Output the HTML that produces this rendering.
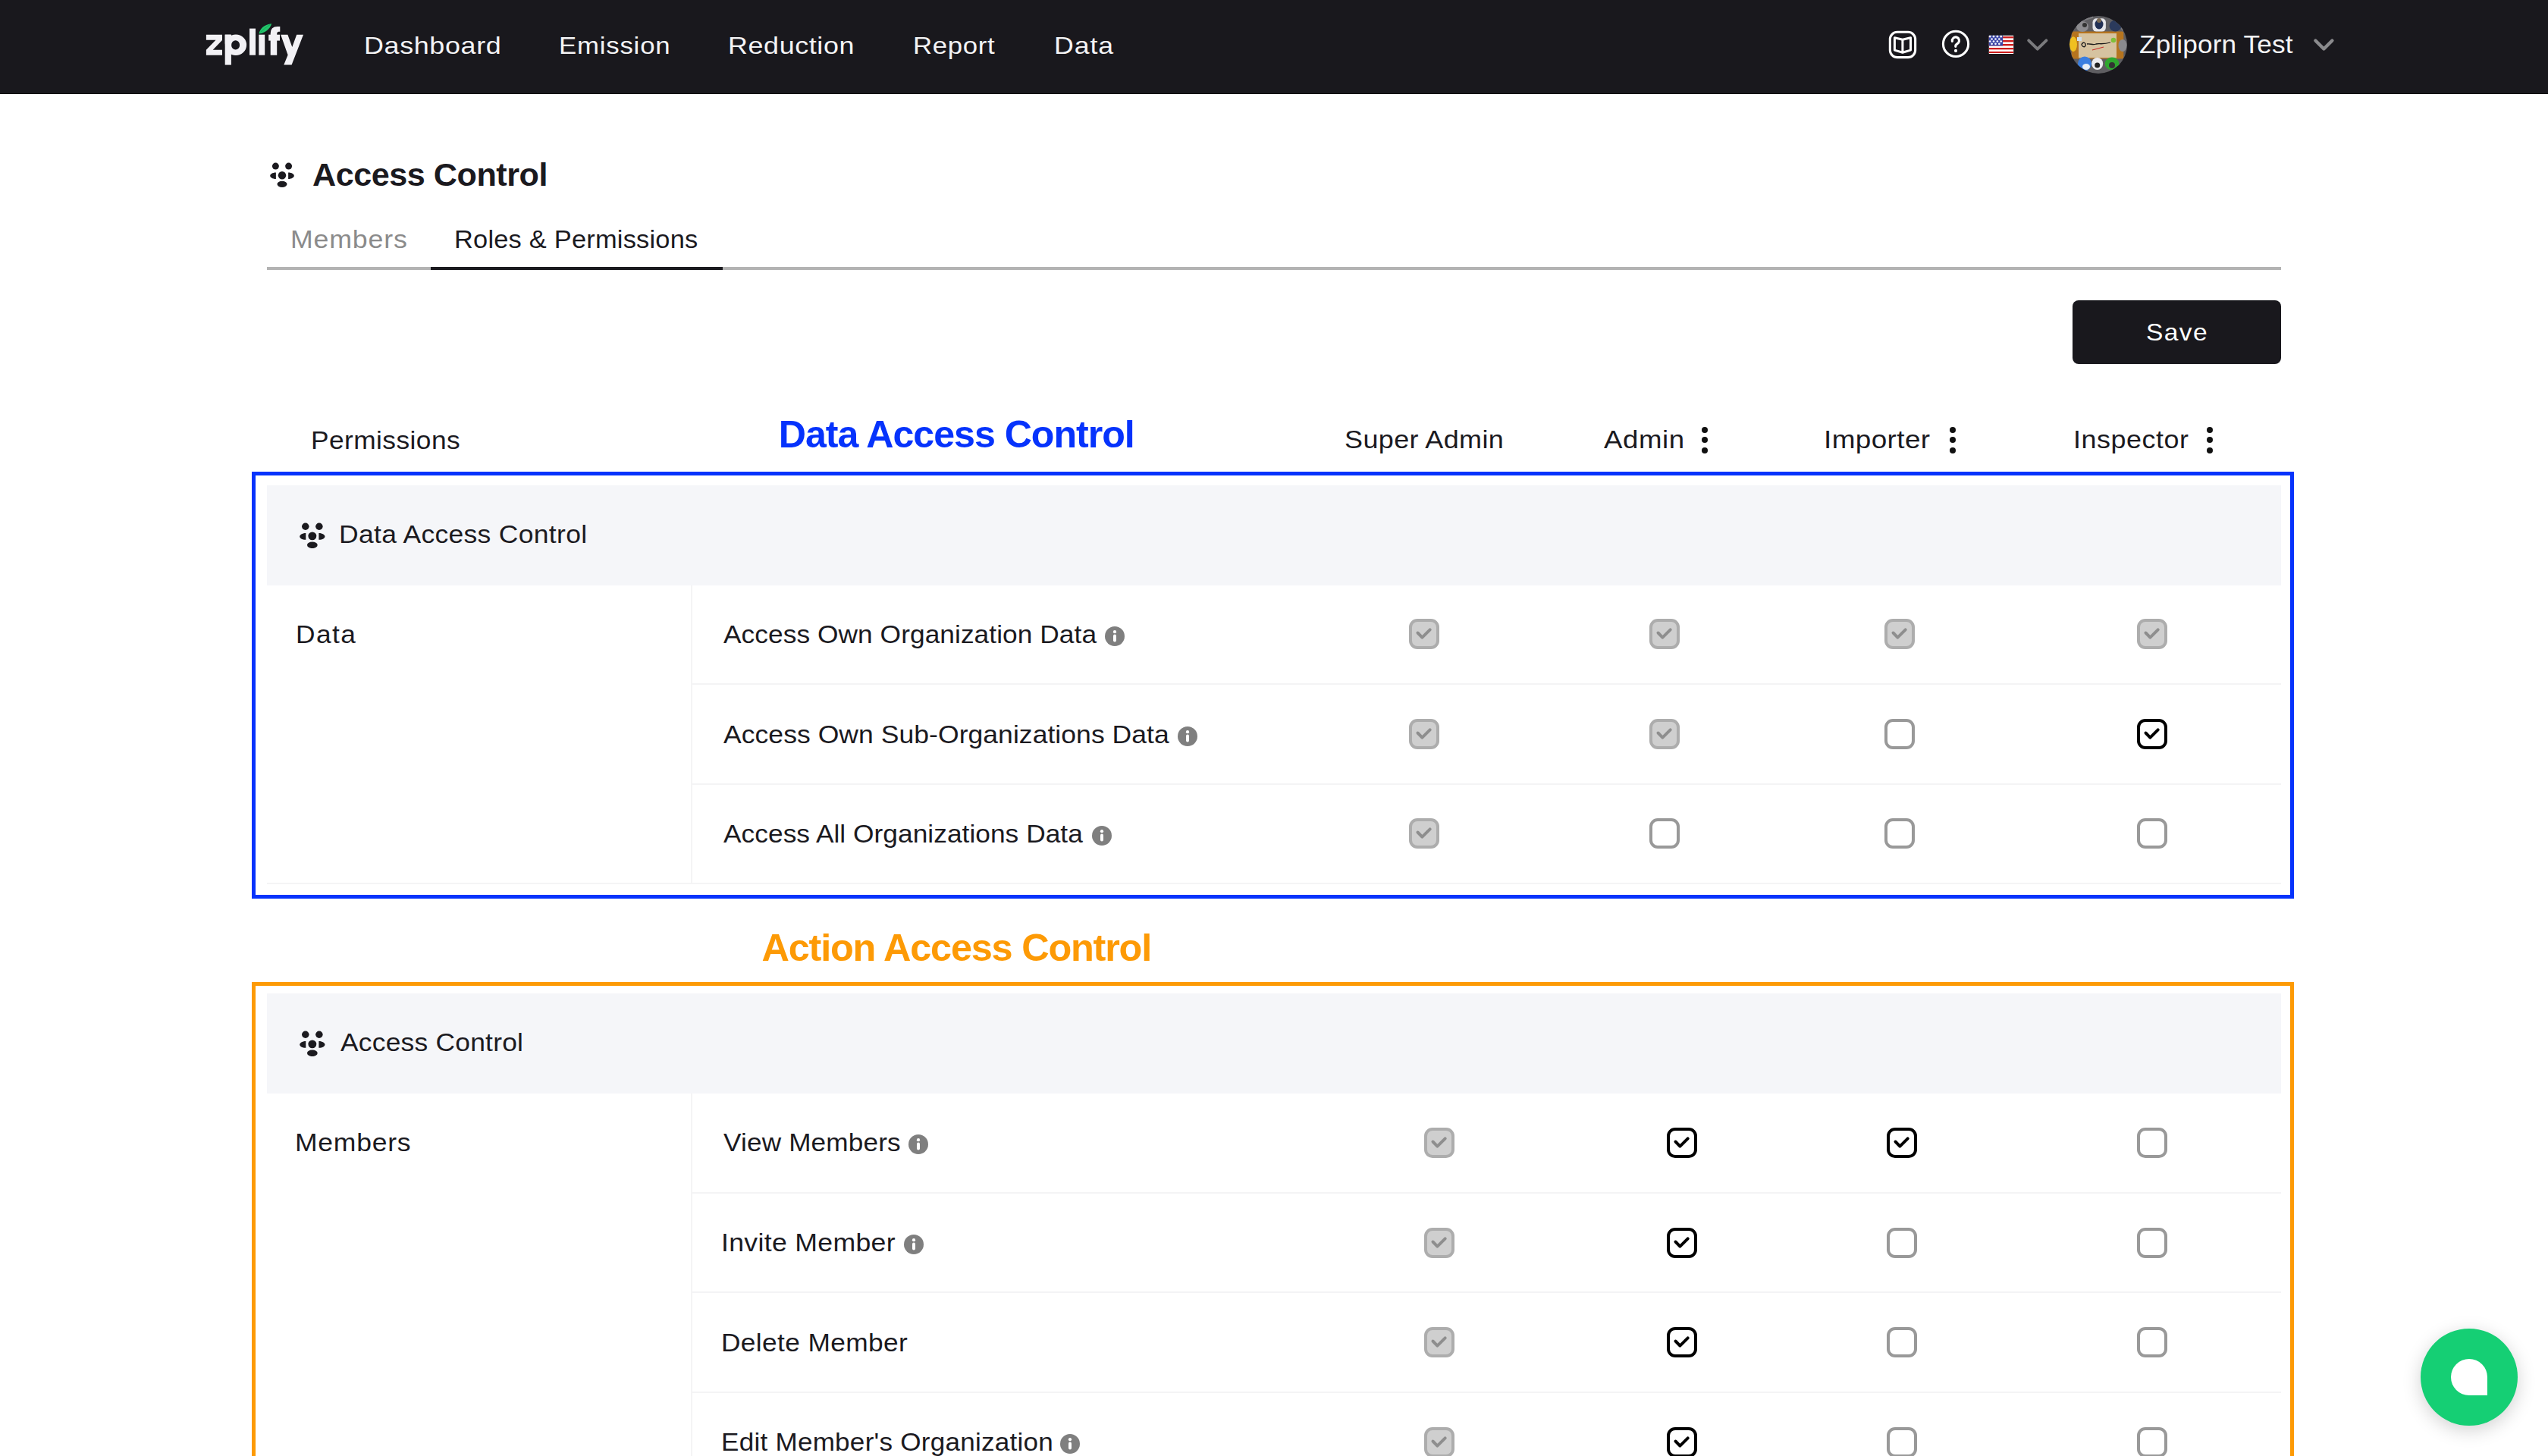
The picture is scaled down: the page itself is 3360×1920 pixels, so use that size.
<!DOCTYPE html>
<html><head><meta charset="utf-8"><title>Access Control - Roles &amp; Permissions</title>
<style>
html,body{margin:0;padding:0;background:#fff;width:3360px;height:1920px;overflow:hidden;position:relative;font-family:"Liberation Sans",sans-serif}
.t{position:absolute;line-height:1;white-space:nowrap;transform-origin:0 0}
.r{position:absolute;display:block}
</style></head><body>
<header>
<div class="r" style="left:0px;top:0px;width:3360px;height:123px;background:#19181d"></div>
<div class="r" style="left:0px;top:123px;width:3360px;height:1px;background:#0c0c0d"></div>
<svg class="r" style="left:0;top:0" width="420" height="123" viewBox="0 0 420 123">
<g fill="#f2f1f5">
<polygon points="271.9,45.7 293,45.7 293,53 280.7,65.8 293,65.8 293,72.7 271.9,72.7 271.9,65.8 284.5,52.7 271.9,52.7"/>
<rect x="296.7" y="45.7" width="8.2" height="39.9"/>
<path fill-rule="evenodd" d="M311,45.5 A14.1,13.8 0 1 1 311,73.1 A14.1,13.8 0 1 1 311,45.5 Z M310.6,53.3 A5.5,6.1 0 1 0 310.6,65.5 A5.5,6.1 0 1 0 310.6,53.3 Z"/>
<rect x="296.7" y="45.7" width="8" height="12"/>
<rect x="329" y="37.6" width="8" height="35.1"/>
<rect x="341.3" y="45.7" width="7.9" height="27"/>
<path d="M356.7,72.7 L356.7,44 Q356.7,35 366,35 L369.3,35 L369.3,41.7 L367.5,41.7 Q365.2,41.7 365.2,44.2 L365.2,72.7 Z"/>
<rect x="354.2" y="45.7" width="14.8" height="7.9"/>
<polygon points="370.2,45.7 379.4,45.7 385.3,62 391.2,45.7 400,45.7 384.6,85.6 374.3,85.6 379.6,72.6"/>
</g>
<path fill="#22c56b" d="M341.5,44.6 C342.5,37.5 349,32 358.2,31.2 C356,38.5 349.5,43.2 341.5,44.6 Z"/>
<path stroke="#159a50" stroke-width="0.7" fill="none" d="M343.5,42.5 C347,39 351,36 356,32.5"/>
</svg>
<nav>
<div class="t" style="left:479.60px;top:43.68px;font-size:32.27px;letter-spacing:0.575px;color:#f4f4f6;transform:scaleX(1.1127);">Dashboard</div>
<div class="t" style="left:737.20px;top:43.68px;font-size:32.27px;letter-spacing:0.743px;color:#f4f4f6;transform:scaleX(1.0771);">Emission</div>
<div class="t" style="left:960.00px;top:43.68px;font-size:32.27px;letter-spacing:0.550px;color:#f4f4f6;transform:scaleX(1.1117);">Reduction</div>
<div class="t" style="left:1203.50px;top:43.68px;font-size:32.27px;letter-spacing:0.600px;color:#f4f4f6;transform:scaleX(1.0773);">Report</div>
<div class="t" style="left:1390.00px;top:43.68px;font-size:32.27px;letter-spacing:0.800px;color:#f4f4f6;transform:scaleX(1.1059);">Data</div>
</nav>
<svg class="r" style="left:2480px;top:0" width="620" height="123" viewBox="2480 0 620 123">
<rect x="2492.35" y="42.25" width="33.3" height="33.4" rx="9.5" ry="9.5" fill="none" stroke="#fff" stroke-width="3.1"/>
<path d="M2498.4,49.7 L2508.9,52.3 L2519.5,49.7 L2519.5,66.1 L2508.9,69.3 L2498.4,66.1 Z M2508.9,52.3 L2508.9,69.3" fill="none" stroke="#fff" stroke-width="3" stroke-linejoin="round"/>
<circle cx="2579.04" cy="57.9" r="16.6" fill="none" stroke="#fff" stroke-width="3.1"/>
<path d="M2574.4,54.4 A4.6,4.6 0 1 1 2582.3,56.7 C2581,58 2578.8,58.6 2578.8,60.3 L2578.8,61.3" fill="none" stroke="#fff" stroke-width="3.2" stroke-linecap="round" stroke-linejoin="round"/>
<circle cx="2579" cy="66.9" r="2.1" fill="#fff"/>
<g>
<rect x="2622.8" y="46.8" width="32.4" height="24.2" fill="#fff"/>
<rect x="2622.8" y="48.1" width="32.4" height="2.3" fill="#cc1d1d"/>
<rect x="2622.8" y="53.0" width="32.4" height="2.4" fill="#cc1d1d"/>
<rect x="2622.8" y="58.0" width="32.4" height="2.4" fill="#cc1d1d"/>
<rect x="2622.8" y="63.0" width="32.4" height="2.3" fill="#cc1d1d"/>
<rect x="2622.8" y="67.9" width="32.4" height="2.1" fill="#cc1d1d"/>
<rect x="2622.8" y="46.8" width="18.3" height="13.6" fill="#3a45a6"/>
<g fill="#f4f6ff"><circle cx="2624.2" cy="48.2" r="1.35"/><circle cx="2629" cy="48.2" r="1.35"/><circle cx="2633.9" cy="48.2" r="1.35"/><circle cx="2638.7" cy="48.2" r="1.35"/><circle cx="2626.6" cy="51.5" r="1.35"/><circle cx="2631.5" cy="51.5" r="1.35"/><circle cx="2636.3" cy="51.5" r="1.35"/><circle cx="2624.2" cy="54.6" r="1.35"/><circle cx="2629" cy="54.6" r="1.35"/><circle cx="2633.9" cy="54.6" r="1.35"/><circle cx="2638.7" cy="54.6" r="1.35"/><circle cx="2626.6" cy="57.8" r="1.35"/><circle cx="2631.5" cy="57.8" r="1.35"/><circle cx="2636.3" cy="57.8" r="1.35"/></g>
</g>
<polyline points="2675.2,53.3 2686.8,64.6 2698.4,53.3" fill="none" stroke="#7b7b7e" stroke-width="3.9" stroke-linecap="round" stroke-linejoin="round"/>
<defs><clipPath id="av"><circle cx="2767" cy="59" r="38"/></clipPath></defs>
<g clip-path="url(#av)">
<rect x="2729" y="21" width="76" height="76" fill="#5f5e62"/>
<path d="M2735,30 L2760,22 M2790,26 L2800,40 M2733,80 L2745,95 M2790,92 L2803,78" stroke="#7d7c80" stroke-width="3"/>
<rect x="2731.7" y="41.6" width="68.6" height="35.8" rx="2" fill="#b5741f"/>
<rect x="2741" y="44" width="50" height="32.2" fill="#d6c3a0"/>
<rect x="2739" y="49" width="6" height="5" fill="#cfe0f0"/>
<ellipse cx="2746" cy="35" rx="8" ry="7" fill="#8d8c90"/>
<ellipse cx="2749" cy="33" rx="3" ry="3" fill="#333"/>
<rect x="2759.5" y="24.3" width="17.4" height="17.3" rx="5" fill="#e6e6ea"/>
<ellipse cx="2768" cy="32" rx="5.5" ry="6.5" fill="#223055"/>
<ellipse cx="2768" cy="27" rx="3" ry="3" fill="#7a6a55"/>
<ellipse cx="2789.5" cy="34" rx="8" ry="7.5" fill="#2b3a5c"/>
<ellipse cx="2734" cy="58.3" rx="5" ry="10" fill="#f0c020"/>
<ellipse cx="2799" cy="60" rx="5.5" ry="8" fill="#8a8a8e"/>
<ellipse cx="2749" cy="84" rx="9" ry="9.5" fill="#3a7ee0"/>
<ellipse cx="2751" cy="88" rx="5" ry="4" fill="#e8eef5"/>
<ellipse cx="2765.7" cy="84" rx="7.5" ry="8" fill="#ececf0"/>
<ellipse cx="2765.7" cy="86" rx="3.5" ry="3.5" fill="#222"/>
<ellipse cx="2785" cy="84" rx="9.3" ry="8.5" fill="#2ea82e"/>
<ellipse cx="2785" cy="86" rx="4" ry="4" fill="#333"/>
<circle cx="2787" cy="53" r="3.3" fill="#7fc03a"/>
<path d="M2745,60 C2745,56 2749,55 2750,58 C2751,62 2747,63 2746,60 M2752,58 C2756,57 2760,60 2764,58 C2768,57 2773,59 2783,56" stroke="#1a1a1a" stroke-width="1.3" fill="none"/>
<path d="M2759,66 L2774,62" stroke="#c8302a" stroke-width="1.2"/>
</g>
<polyline points="3053.4,53.5 3064.4,64.5 3075.4,53.5" fill="none" stroke="#8a8a8d" stroke-width="4.4" stroke-linecap="round" stroke-linejoin="round"/>
</svg>
<div class="t" style="left:2820.70px;top:43.21px;font-size:32.70px;letter-spacing:0.133px;color:#f4f4f6;transform:scaleX(1.0765);">Zpliporn Test</div>
</header>
<main>
<svg class="r" style="left:356px;top:213.6px" width="32" height="33" viewBox="0 0 32 33" preserveAspectRatio="none"><g fill="#1b1a1f"><circle cx="7.4" cy="5.1" r="4.5"/><circle cx="24.6" cy="5.1" r="4.5"/><circle cx="16" cy="17.2" r="5.2"/>
<path d="M7.9,13.5 L7.9,22 C3,22 0.2,19.6 0.2,17.75 C0.2,15.9 3,13.5 7.9,13.5 Z"/>
<path d="M24.1,13.5 L24.1,22 C29,22 31.8,19.6 31.8,17.75 C31.8,15.9 29,13.5 24.1,13.5 Z"/>
<ellipse cx="16" cy="28.8" rx="6.5" ry="4.1"/></g></svg>
<div class="t" style="left:412.00px;top:208.74px;font-size:43.17px;letter-spacing:-0.477px;color:#1b1a1f;font-weight:700;">Access Control</div>
<div class="t" style="left:382.50px;top:300.18px;font-size:32.85px;letter-spacing:0.733px;color:#8b8b8b;transform:scaleX(1.0891);">Members</div>
<div class="t" style="left:598.80px;top:300.18px;font-size:32.85px;letter-spacing:0.211px;color:#1b1a1f;transform:scaleX(1.0475);">Roles &amp; Permissions</div>
<div class="r" style="left:352px;top:352px;width:2656px;height:4px;background:#b3b3b3"></div>
<div class="r" style="left:568px;top:352px;width:385px;height:4px;background:#1b1a1f"></div>
<div class="r" style="left:2733px;top:396px;width:275px;height:84px;background:#19181d;border-radius:8px"></div>
<div class="t" style="left:2830.00px;top:422.48px;font-size:32.27px;letter-spacing:1.333px;color:#ffffff;transform:scaleX(1.0405);">Save</div>
<div class="t" style="left:410.00px;top:564.73px;font-size:32.56px;letter-spacing:0.400px;color:#1b1a1f;transform:scaleX(1.0847);">Permissions</div>
<div class="t" style="left:1026.80px;top:548.14px;font-size:50.15px;letter-spacing:-1.039px;color:#0633fc;font-weight:700;">Data Access Control</div>
<div class="t" style="left:1773.00px;top:564.33px;font-size:32.56px;letter-spacing:0.340px;color:#1b1a1f;transform:scaleX(1.1059);">Super Admin</div>
<div class="t" style="left:2115.00px;top:564.33px;font-size:32.56px;letter-spacing:0.500px;color:#1b1a1f;transform:scaleX(1.1250);">Admin</div>
<div class="r" style="left:2244px;top:562.5px;width:8px;height:8px;border-radius:50%;background:#111"></div>
<div class="r" style="left:2244px;top:576px;width:8px;height:8px;border-radius:50%;background:#111"></div>
<div class="r" style="left:2244px;top:589.5px;width:8px;height:8px;border-radius:50%;background:#111"></div>
<div class="t" style="left:2404.90px;top:564.33px;font-size:32.56px;letter-spacing:0.343px;color:#1b1a1f;transform:scaleX(1.1339);">Importer</div>
<div class="r" style="left:2571px;top:562.5px;width:8px;height:8px;border-radius:50%;background:#111"></div>
<div class="r" style="left:2571px;top:576px;width:8px;height:8px;border-radius:50%;background:#111"></div>
<div class="r" style="left:2571px;top:589.5px;width:8px;height:8px;border-radius:50%;background:#111"></div>
<div class="t" style="left:2734.10px;top:564.33px;font-size:32.56px;letter-spacing:0.475px;color:#1b1a1f;transform:scaleX(1.1037);">Inspector</div>
<div class="r" style="left:2910px;top:562.5px;width:8px;height:8px;border-radius:50%;background:#111"></div>
<div class="r" style="left:2910px;top:576px;width:8px;height:8px;border-radius:50%;background:#111"></div>
<div class="r" style="left:2910px;top:589.5px;width:8px;height:8px;border-radius:50%;background:#111"></div>
<section>
<div class="r" style="left:332px;top:622px;width:2693px;height:563px;border:5px solid #0633fc;box-sizing:border-box"></div>
<div class="r" style="left:352px;top:640px;width:2656px;height:132px;background:#f5f6f9"></div>
<svg class="r" style="left:395.3px;top:688.5px" width="33.7" height="34.2" viewBox="0 0 32 33" preserveAspectRatio="none"><g fill="#1b1a1f"><circle cx="7.4" cy="5.1" r="4.5"/><circle cx="24.6" cy="5.1" r="4.5"/><circle cx="16" cy="17.2" r="5.2"/>
<path d="M7.9,13.5 L7.9,22 C3,22 0.2,19.6 0.2,17.75 C0.2,15.9 3,13.5 7.9,13.5 Z"/>
<path d="M24.1,13.5 L24.1,22 C29,22 31.8,19.6 31.8,17.75 C31.8,15.9 29,13.5 24.1,13.5 Z"/>
<ellipse cx="16" cy="28.8" rx="6.5" ry="4.1"/></g></svg>
<div class="t" style="left:447.00px;top:689.31px;font-size:32.70px;letter-spacing:0.278px;color:#1b1a1f;transform:scaleX(1.0861);">Data Access Control</div>
<div class="r" style="left:911px;top:772px;width:2px;height:394px;background:#f4f4f5"></div>
<div class="r" style="left:913px;top:901px;width:2095px;height:2px;background:#f4f4f5"></div>
<div class="r" style="left:913px;top:1033px;width:2095px;height:2px;background:#f4f4f5"></div>
<div class="r" style="left:352px;top:1164px;width:2656px;height:2px;background:#f4f4f5"></div>
<div class="t" style="left:389.80px;top:821.23px;font-size:32.56px;letter-spacing:1.333px;color:#1b1a1f;transform:scaleX(1.0857);">Data</div>
<div class="t" style="left:954.00px;top:821.23px;font-size:32.56px;letter-spacing:0.044px;color:#1b1a1f;transform:scaleX(1.0852);">Access Own Organization Data</div>
<svg class="r" style="left:1457.0px;top:826.0px" width="26" height="26" viewBox="0 0 26 26"><circle cx="13" cy="13" r="13" fill="#7f7f7f"/><circle cx="13" cy="7.2" r="2.1" fill="#fff"/><rect x="11" y="10.6" width="4" height="9.8" rx="2" fill="#fff"/></svg>
<svg class="r" style="left:1858px;top:816.0px" width="40" height="40" viewBox="0 0 40 40"><rect x="2" y="2" width="36" height="36" rx="9" fill="#cfcfcf" stroke="#adadad" stroke-width="4"/><path d="M11.5,18.5 L17.4,24.6 L27.7,14.4" fill="none" stroke="#8e8e8e" stroke-width="4" stroke-linecap="round" stroke-linejoin="round"/></svg>
<svg class="r" style="left:2175px;top:816.0px" width="40" height="40" viewBox="0 0 40 40"><rect x="2" y="2" width="36" height="36" rx="9" fill="#cfcfcf" stroke="#adadad" stroke-width="4"/><path d="M11.5,18.5 L17.4,24.6 L27.7,14.4" fill="none" stroke="#8e8e8e" stroke-width="4" stroke-linecap="round" stroke-linejoin="round"/></svg>
<svg class="r" style="left:2485px;top:816.0px" width="40" height="40" viewBox="0 0 40 40"><rect x="2" y="2" width="36" height="36" rx="9" fill="#cfcfcf" stroke="#adadad" stroke-width="4"/><path d="M11.5,18.5 L17.4,24.6 L27.7,14.4" fill="none" stroke="#8e8e8e" stroke-width="4" stroke-linecap="round" stroke-linejoin="round"/></svg>
<svg class="r" style="left:2818px;top:816.0px" width="40" height="40" viewBox="0 0 40 40"><rect x="2" y="2" width="36" height="36" rx="9" fill="#cfcfcf" stroke="#adadad" stroke-width="4"/><path d="M11.5,18.5 L17.4,24.6 L27.7,14.4" fill="none" stroke="#8e8e8e" stroke-width="4" stroke-linecap="round" stroke-linejoin="round"/></svg>
<div class="t" style="left:954.00px;top:952.73px;font-size:32.56px;letter-spacing:0.031px;color:#1b1a1f;transform:scaleX(1.0920);">Access Own Sub-Organizations Data</div>
<svg class="r" style="left:1552.9px;top:957.5px" width="26" height="26" viewBox="0 0 26 26"><circle cx="13" cy="13" r="13" fill="#7f7f7f"/><circle cx="13" cy="7.2" r="2.1" fill="#fff"/><rect x="11" y="10.6" width="4" height="9.8" rx="2" fill="#fff"/></svg>
<svg class="r" style="left:1858px;top:947.5px" width="40" height="40" viewBox="0 0 40 40"><rect x="2" y="2" width="36" height="36" rx="9" fill="#cfcfcf" stroke="#adadad" stroke-width="4"/><path d="M11.5,18.5 L17.4,24.6 L27.7,14.4" fill="none" stroke="#8e8e8e" stroke-width="4" stroke-linecap="round" stroke-linejoin="round"/></svg>
<svg class="r" style="left:2175px;top:947.5px" width="40" height="40" viewBox="0 0 40 40"><rect x="2" y="2" width="36" height="36" rx="9" fill="#cfcfcf" stroke="#adadad" stroke-width="4"/><path d="M11.5,18.5 L17.4,24.6 L27.7,14.4" fill="none" stroke="#8e8e8e" stroke-width="4" stroke-linecap="round" stroke-linejoin="round"/></svg>
<svg class="r" style="left:2485px;top:947.5px" width="40" height="40" viewBox="0 0 40 40"><rect x="2" y="2" width="36" height="36" rx="9" fill="#fff" stroke="#999" stroke-width="4"/></svg>
<svg class="r" style="left:2818px;top:947.5px" width="40" height="40" viewBox="0 0 40 40"><rect x="2" y="2" width="36" height="36" rx="9" fill="#fff" stroke="#000" stroke-width="4"/><path d="M11.5,18.5 L17.4,24.6 L27.7,14.4" fill="none" stroke="#000" stroke-width="4" stroke-linecap="round" stroke-linejoin="round"/></svg>
<div class="t" style="left:954.00px;top:1084.23px;font-size:32.56px;letter-spacing:0.021px;color:#1b1a1f;transform:scaleX(1.0854);">Access All Organizations Data</div>
<svg class="r" style="left:1439.7px;top:1089.0px" width="26" height="26" viewBox="0 0 26 26"><circle cx="13" cy="13" r="13" fill="#7f7f7f"/><circle cx="13" cy="7.2" r="2.1" fill="#fff"/><rect x="11" y="10.6" width="4" height="9.8" rx="2" fill="#fff"/></svg>
<svg class="r" style="left:1858px;top:1079.0px" width="40" height="40" viewBox="0 0 40 40"><rect x="2" y="2" width="36" height="36" rx="9" fill="#cfcfcf" stroke="#adadad" stroke-width="4"/><path d="M11.5,18.5 L17.4,24.6 L27.7,14.4" fill="none" stroke="#8e8e8e" stroke-width="4" stroke-linecap="round" stroke-linejoin="round"/></svg>
<svg class="r" style="left:2175px;top:1079.0px" width="40" height="40" viewBox="0 0 40 40"><rect x="2" y="2" width="36" height="36" rx="9" fill="#fff" stroke="#999" stroke-width="4"/></svg>
<svg class="r" style="left:2485px;top:1079.0px" width="40" height="40" viewBox="0 0 40 40"><rect x="2" y="2" width="36" height="36" rx="9" fill="#fff" stroke="#999" stroke-width="4"/></svg>
<svg class="r" style="left:2818px;top:1079.0px" width="40" height="40" viewBox="0 0 40 40"><rect x="2" y="2" width="36" height="36" rx="9" fill="#fff" stroke="#999" stroke-width="4"/></svg>
</section>
<section>
<div class="t" style="left:1004.50px;top:1224.99px;font-size:50.44px;letter-spacing:-1.215px;color:#fd9a05;font-weight:700;">Action Access Control</div>
<div class="r" style="left:332px;top:1295px;width:2693px;height:700px;border:5px solid #fd9a05;box-sizing:border-box"></div>
<div class="r" style="left:352px;top:1310px;width:2656px;height:132px;background:#f5f6f9"></div>
<svg class="r" style="left:395px;top:1358.5px" width="33.7" height="34.2" viewBox="0 0 32 33" preserveAspectRatio="none"><g fill="#1b1a1f"><circle cx="7.4" cy="5.1" r="4.5"/><circle cx="24.6" cy="5.1" r="4.5"/><circle cx="16" cy="17.2" r="5.2"/>
<path d="M7.9,13.5 L7.9,22 C3,22 0.2,19.6 0.2,17.75 C0.2,15.9 3,13.5 7.9,13.5 Z"/>
<path d="M24.1,13.5 L24.1,22 C29,22 31.8,19.6 31.8,17.75 C31.8,15.9 29,13.5 24.1,13.5 Z"/>
<ellipse cx="16" cy="28.8" rx="6.5" ry="4.1"/></g></svg>
<div class="t" style="left:449.00px;top:1359.31px;font-size:32.70px;letter-spacing:0.200px;color:#1b1a1f;transform:scaleX(1.0832);">Access Control</div>
<div class="r" style="left:911px;top:1442px;width:2px;height:600px;background:#f4f4f5"></div>
<div class="r" style="left:913px;top:1572px;width:2095px;height:2px;background:#f4f4f5"></div>
<div class="r" style="left:913px;top:1703px;width:2095px;height:2px;background:#f4f4f5"></div>
<div class="r" style="left:913px;top:1835px;width:2095px;height:2px;background:#f4f4f5"></div>
<div class="t" style="left:389.20px;top:1491.23px;font-size:32.56px;letter-spacing:0.667px;color:#1b1a1f;transform:scaleX(1.0919);">Members</div>
<div class="t" style="left:954.00px;top:1491.23px;font-size:32.56px;letter-spacing:0.145px;color:#1b1a1f;transform:scaleX(1.0805);">View Members</div>
<svg class="r" style="left:1198.3px;top:1496.0px" width="26" height="26" viewBox="0 0 26 26"><circle cx="13" cy="13" r="13" fill="#7f7f7f"/><circle cx="13" cy="7.2" r="2.1" fill="#fff"/><rect x="11" y="10.6" width="4" height="9.8" rx="2" fill="#fff"/></svg>
<svg class="r" style="left:1878px;top:1486.9px" width="40" height="40" viewBox="0 0 40 40"><rect x="2" y="2" width="36" height="36" rx="9" fill="#cfcfcf" stroke="#adadad" stroke-width="4"/><path d="M11.5,18.5 L17.4,24.6 L27.7,14.4" fill="none" stroke="#8e8e8e" stroke-width="4" stroke-linecap="round" stroke-linejoin="round"/></svg>
<svg class="r" style="left:2198px;top:1486.9px" width="40" height="40" viewBox="0 0 40 40"><rect x="2" y="2" width="36" height="36" rx="9" fill="#fff" stroke="#000" stroke-width="4"/><path d="M11.5,18.5 L17.4,24.6 L27.7,14.4" fill="none" stroke="#000" stroke-width="4" stroke-linecap="round" stroke-linejoin="round"/></svg>
<svg class="r" style="left:2488px;top:1486.9px" width="40" height="40" viewBox="0 0 40 40"><rect x="2" y="2" width="36" height="36" rx="9" fill="#fff" stroke="#000" stroke-width="4"/><path d="M11.5,18.5 L17.4,24.6 L27.7,14.4" fill="none" stroke="#000" stroke-width="4" stroke-linecap="round" stroke-linejoin="round"/></svg>
<svg class="r" style="left:2818px;top:1486.9px" width="40" height="40" viewBox="0 0 40 40"><rect x="2" y="2" width="36" height="36" rx="9" fill="#fff" stroke="#999" stroke-width="4"/></svg>
<div class="t" style="left:951.00px;top:1622.90px;font-size:32.56px;letter-spacing:0.283px;color:#1b1a1f;transform:scaleX(1.0956);">Invite Member</div>
<svg class="r" style="left:1191.7px;top:1627.67px" width="26" height="26" viewBox="0 0 26 26"><circle cx="13" cy="13" r="13" fill="#7f7f7f"/><circle cx="13" cy="7.2" r="2.1" fill="#fff"/><rect x="11" y="10.6" width="4" height="9.8" rx="2" fill="#fff"/></svg>
<svg class="r" style="left:1878px;top:1618.57px" width="40" height="40" viewBox="0 0 40 40"><rect x="2" y="2" width="36" height="36" rx="9" fill="#cfcfcf" stroke="#adadad" stroke-width="4"/><path d="M11.5,18.5 L17.4,24.6 L27.7,14.4" fill="none" stroke="#8e8e8e" stroke-width="4" stroke-linecap="round" stroke-linejoin="round"/></svg>
<svg class="r" style="left:2198px;top:1618.57px" width="40" height="40" viewBox="0 0 40 40"><rect x="2" y="2" width="36" height="36" rx="9" fill="#fff" stroke="#000" stroke-width="4"/><path d="M11.5,18.5 L17.4,24.6 L27.7,14.4" fill="none" stroke="#000" stroke-width="4" stroke-linecap="round" stroke-linejoin="round"/></svg>
<svg class="r" style="left:2488px;top:1618.57px" width="40" height="40" viewBox="0 0 40 40"><rect x="2" y="2" width="36" height="36" rx="9" fill="#fff" stroke="#999" stroke-width="4"/></svg>
<svg class="r" style="left:2818px;top:1618.57px" width="40" height="40" viewBox="0 0 40 40"><rect x="2" y="2" width="36" height="36" rx="9" fill="#fff" stroke="#999" stroke-width="4"/></svg>
<div class="t" style="left:951.00px;top:1754.57px;font-size:32.56px;letter-spacing:0.333px;color:#1b1a1f;transform:scaleX(1.0852);">Delete Member</div>
<svg class="r" style="left:1878px;top:1750.24px" width="40" height="40" viewBox="0 0 40 40"><rect x="2" y="2" width="36" height="36" rx="9" fill="#cfcfcf" stroke="#adadad" stroke-width="4"/><path d="M11.5,18.5 L17.4,24.6 L27.7,14.4" fill="none" stroke="#8e8e8e" stroke-width="4" stroke-linecap="round" stroke-linejoin="round"/></svg>
<svg class="r" style="left:2198px;top:1750.24px" width="40" height="40" viewBox="0 0 40 40"><rect x="2" y="2" width="36" height="36" rx="9" fill="#fff" stroke="#000" stroke-width="4"/><path d="M11.5,18.5 L17.4,24.6 L27.7,14.4" fill="none" stroke="#000" stroke-width="4" stroke-linecap="round" stroke-linejoin="round"/></svg>
<svg class="r" style="left:2488px;top:1750.24px" width="40" height="40" viewBox="0 0 40 40"><rect x="2" y="2" width="36" height="36" rx="9" fill="#fff" stroke="#999" stroke-width="4"/></svg>
<svg class="r" style="left:2818px;top:1750.24px" width="40" height="40" viewBox="0 0 40 40"><rect x="2" y="2" width="36" height="36" rx="9" fill="#fff" stroke="#999" stroke-width="4"/></svg>
<div class="t" style="left:951.00px;top:1886.24px;font-size:32.56px;letter-spacing:0.224px;color:#1b1a1f;transform:scaleX(1.0781);">Edit Member's Organization</div>
<svg class="r" style="left:1398.3px;top:1891.01px" width="26" height="26" viewBox="0 0 26 26"><circle cx="13" cy="13" r="13" fill="#7f7f7f"/><circle cx="13" cy="7.2" r="2.1" fill="#fff"/><rect x="11" y="10.6" width="4" height="9.8" rx="2" fill="#fff"/></svg>
<svg class="r" style="left:1878px;top:1881.91px" width="40" height="40" viewBox="0 0 40 40"><rect x="2" y="2" width="36" height="36" rx="9" fill="#cfcfcf" stroke="#adadad" stroke-width="4"/><path d="M11.5,18.5 L17.4,24.6 L27.7,14.4" fill="none" stroke="#8e8e8e" stroke-width="4" stroke-linecap="round" stroke-linejoin="round"/></svg>
<svg class="r" style="left:2198px;top:1881.91px" width="40" height="40" viewBox="0 0 40 40"><rect x="2" y="2" width="36" height="36" rx="9" fill="#fff" stroke="#000" stroke-width="4"/><path d="M11.5,18.5 L17.4,24.6 L27.7,14.4" fill="none" stroke="#000" stroke-width="4" stroke-linecap="round" stroke-linejoin="round"/></svg>
<svg class="r" style="left:2488px;top:1881.91px" width="40" height="40" viewBox="0 0 40 40"><rect x="2" y="2" width="36" height="36" rx="9" fill="#fff" stroke="#999" stroke-width="4"/></svg>
<svg class="r" style="left:2818px;top:1881.91px" width="40" height="40" viewBox="0 0 40 40"><rect x="2" y="2" width="36" height="36" rx="9" fill="#fff" stroke="#999" stroke-width="4"/></svg>
</section>
</main>
<div class="r" style="left:3192px;top:1752px;width:128px;height:128px;border-radius:50%;background:#15cf74;box-shadow:0 6px 24px rgba(0,0,0,0.18)"></div>
<div class="r" style="left:3232px;top:1792px;width:48px;height:48px;border-radius:24px 24px 0 24px;background:#fff"></div>
</body></html>
